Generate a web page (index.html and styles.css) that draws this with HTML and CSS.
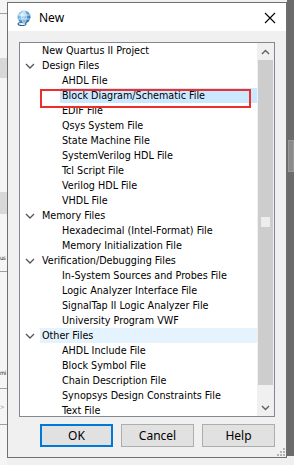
FILE: index.html
```html
<!DOCTYPE html>
<html lang="en">
<head>
    <meta charset="UTF-8">
    <title>New</title>
    <link rel="stylesheet" href="styles.css">
</head>
<body>
<div class="screen">
    <div class="bg-left">
        <div class="bg-line l1"></div>
        <div class="bg-block b1"></div>
        <div class="bg-block b2"></div>
        <div class="bg-text t1">us</div>
        <div class="bg-line l2"></div>
        <div class="bg-text t2">mi</div>
        <div class="bg-line l3"></div>
        <div class="bg-text t3">&gt;</div>
        <div class="bg-line l4"></div>
    </div>

    <div class="dialog">
        <div class="titlebar">
            <svg class="app-icon" width="16" height="16" viewBox="0 0 16 16">
                <defs>
                    <radialGradient id="globe" cx="0.35" cy="0.3" r="0.8">
                        <stop offset="0" stop-color="#d8eefc"/>
                        <stop offset="0.5" stop-color="#5aa3dc"/>
                        <stop offset="1" stop-color="#1a5c9e"/>
                    </radialGradient>
                </defs>
                <ellipse cx="6" cy="14" rx="4" ry="1.5" fill="none" stroke="#2a5f95" stroke-width="1.2"/>
                <circle cx="8" cy="7" r="6.5" fill="url(#globe)"/>
                <path d="M8 0.5 C5 3 5 11 8 13.5 M8 0.5 C11 3 11 11 8 13.5 M1.8 5 H14.2 M1.8 9 H14.2 M8 0.5 V13.5" fill="none" stroke="#ffffff" stroke-width="0.8" opacity="0.85"/>
            </svg>
            <span class="title">New</span>
            <svg class="close" width="12" height="12" viewBox="0 0 12 12">
                <path d="M1 1 L11 11 M11 1 L1 11" stroke="#000" stroke-width="1.1"/>
            </svg>
        </div>

        <div class="dialog-body">
            <div class="listbox">
                <ul class="tree">
                    <li class="item top"><span class="label">New Quartus II Project</span></li>
                    <li class="item top"><svg class="chev" width="10" height="6" viewBox="0 0 10 6"><path d="M1 1 L5 5 L9 1" fill="none" stroke="#555" stroke-width="1.3"/></svg><span class="label">Design Files</span></li>
                    <li class="item child"><span class="label">AHDL File</span></li>
                    <li class="item child"><span class="label selected">Block Diagram/Schematic File</span></li>
                    <li class="item child"><span class="label">EDIF File</span></li>
                    <li class="item child"><span class="label">Qsys System File</span></li>
                    <li class="item child"><span class="label">State Machine File</span></li>
                    <li class="item child"><span class="label">SystemVerilog HDL File</span></li>
                    <li class="item child"><span class="label">Tcl Script File</span></li>
                    <li class="item child"><span class="label">Verilog HDL File</span></li>
                    <li class="item child"><span class="label">VHDL File</span></li>
                    <li class="item top"><svg class="chev" width="10" height="6" viewBox="0 0 10 6"><path d="M1 1 L5 5 L9 1" fill="none" stroke="#555" stroke-width="1.3"/></svg><span class="label">Memory Files</span></li>
                    <li class="item child"><span class="label">Hexadecimal (Intel-Format) File</span></li>
                    <li class="item child"><span class="label">Memory Initialization File</span></li>
                    <li class="item top"><svg class="chev" width="10" height="6" viewBox="0 0 10 6"><path d="M1 1 L5 5 L9 1" fill="none" stroke="#555" stroke-width="1.3"/></svg><span class="label">Verification/Debugging Files</span></li>
                    <li class="item child"><span class="label">In-System Sources and Probes File</span></li>
                    <li class="item child"><span class="label">Logic Analyzer Interface File</span></li>
                    <li class="item child"><span class="label">SignalTap II Logic Analyzer File</span></li>
                    <li class="item child"><span class="label">University Program VWF</span></li>
                    <li class="item top"><svg class="chev" width="10" height="6" viewBox="0 0 10 6"><path d="M1 1 L5 5 L9 1" fill="none" stroke="#555" stroke-width="1.3"/></svg><span class="label hover">Other Files</span></li>
                    <li class="item child"><span class="label">AHDL Include File</span></li>
                    <li class="item child"><span class="label">Block Symbol File</span></li>
                    <li class="item child"><span class="label">Chain Description File</span></li>
                    <li class="item child"><span class="label">Synopsys Design Constraints File</span></li>
                    <li class="item child"><span class="label">Text File</span></li>
                </ul>
                <div class="scrollbar">
                    <div class="sb-btn">
                        <svg width="9" height="6" viewBox="0 0 9 6"><path d="M1 5 L4.5 1.5 L8 5" fill="none" stroke="#606060" stroke-width="1.4"/></svg>
                    </div>
                    <div class="sb-thumb"><div class="sb-spot"></div></div>
                    <div class="sb-track"></div>
                    <div class="sb-btn">
                        <svg width="9" height="6" viewBox="0 0 9 6"><path d="M1 1 L4.5 4.5 L8 1" fill="none" stroke="#606060" stroke-width="1.4"/></svg>
                    </div>
                </div>
                <!-- red annotation box drawn over the selected row -->
                <div class="annotation"></div>
            </div>

            <div class="buttons">
                <button class="btn default">OK</button>
                <button class="btn">Cancel</button>
                <button class="btn">Help</button>
            </div>

            <svg class="grip" width="8" height="8" viewBox="0 0 8 8">
                <rect x="6" y="0" width="2" height="2" fill="#b4b4b4"/>
                <rect x="3" y="3" width="2" height="2" fill="#b4b4b4"/>
                <rect x="6" y="3" width="2" height="2" fill="#b4b4b4"/>
                <rect x="0" y="6" width="2" height="2" fill="#b4b4b4"/>
                <rect x="3" y="6" width="2" height="2" fill="#b4b4b4"/>
                <rect x="6" y="6" width="2" height="2" fill="#b4b4b4"/>
            </svg>
        </div>
    </div>

    <div class="bg-right">
        <div class="bg-panel"></div>
    </div>
</div>
</body>
</html>
```

FILE: styles.css
```css
html, body {
    margin: 0;
    padding: 0;
}
body {
    width: 294px;
    height: 465px;
    overflow: hidden;
    background-color: #f0f0f0;
    font-family: 'DejaVu Sans Condensed', 'DejaVu Sans', sans-serif;
    font-stretch: condensed;
}
.screen {
    display: flex;
    height: 465px;
}

/* background app, left of the dialog */
.bg-left {
    width: 7px;
    flex: none;
    display: flex;
    flex-direction: column;
    background-color: #f5f5f5;
    overflow: hidden;
}
.bg-line {
    height: 1px;
    background-color: #a0a0a0;
}
.l1 { margin-top: 13px; }
.l2 { margin-top: 8px; }
.l3 { margin-top: 10px; }
.l4 { margin-top: 12px; }
.bg-block {
    background-color: #d8d8d8;
}
.b1 { margin-top: 44px; height: 20px; }
.b2 { margin-top: 114px; height: 22px; }
.bg-text {
    font-size: 6px;
    line-height: 11px;
    letter-spacing: -0.5px;
    color: #222;
    white-space: nowrap;
}
.t1 { margin-top: 38px; }
.t2 { margin-top: 95px; }
.t3 { margin-top: 12px; color: #888; }

/* dialog window */
.dialog {
    width: 278px;
    height: 454px;
    flex: none;
    margin-top: 2px;
    border: 1px solid #6f6f6f;
    background-color: #f0f0f0;
    display: flex;
    flex-direction: column;
}
.titlebar {
    height: 28px;
    flex: none;
    background-color: #ffffff;
    display: flex;
    align-items: center;
    padding-left: 8px;
}
.app-icon {
    margin-right: 7px;
    margin-top: 1px;
}
.title {
    font-family: 'Noto Sans', 'Open Sans', sans-serif;
    font-stretch: normal;
    font-size: 12px;
    color: #000;
    flex: 1;
}
.close {
    margin-right: 10px;
    margin-top: 1px;
}

.dialog-body {
    position: relative;
    flex: 1;
    padding: 11px 11px 0 11px;
    display: flex;
    flex-direction: column;
}

.listbox {
    position: relative;
    height: 373px;
    border: 1px solid #828790;
    background-color: #ffffff;
    display: flex;
}
.tree {
    list-style: none;
    margin: 0;
    padding: 0;
    flex: 1;
    overflow: hidden;
}
.item {
    height: 15px;
    display: flex;
    align-items: center;
    font-size: 10.7px;
    color: #000;
    white-space: nowrap;
    position: relative;
}
.item.top {
    padding-left: 20px;
}
.item.child {
    padding-left: 40px;
}
.chev {
    position: absolute;
    left: 5px;
    top: 5px;
}
.label {
    flex: 1;
    height: 15px;
    line-height: 15px;
    padding-left: 2px;
}
.label.selected {
    background-color: #cce8ff;
}
.label.hover {
    background-color: #e5f3ff;
}

.scrollbar {
    width: 17px;
    flex: none;
    background-color: #f0f0f0;
    display: flex;
    flex-direction: column;
}
.sb-btn {
    height: 17px;
    display: flex;
    align-items: center;
    justify-content: center;
}
.sb-thumb {
    height: 325px;
    background-color: #cdcdcd;
    margin: 0 1px;
}
.sb-spot {
    width: 9px;
    height: 10px;
    margin: 157px 0 0 3px;
    background-color: #ededed;
}
.sb-track {
    flex: 1;
}

.annotation {
    position: absolute;
    left: 20px;
    top: 46px;
    width: 207px;
    height: 15px;
    border: 2px solid #ee2d2d;
}

.buttons {
    display: flex;
    justify-content: flex-end;
    gap: 8px;
    margin-top: 7px;
}
.btn {
    width: 73px;
    height: 23px;
    margin: 0;
    padding: 0;
    background-color: #e1e1e1;
    border: 1px solid #adadad;
    font-family: 'Noto Sans', 'Open Sans', sans-serif;
    font-stretch: normal;
    font-size: 12px;
    color: #000;
}
.btn.default {
    border: 2px solid #0078d7;
}
.grip {
    position: absolute;
    right: 1px;
    bottom: 1px;
}

/* background app, right of the dialog */
.bg-right {
    flex: 1;
    height: 456px;
    background-color: #6b6b6b;
    display: flex;
    flex-direction: column;
}
.bg-panel {
    margin-top: 140px;
    margin-left: 1px;
    height: 30px;
    background-color: #8a8a8a;
    border: 1px solid #9a9a9a;
}
```
